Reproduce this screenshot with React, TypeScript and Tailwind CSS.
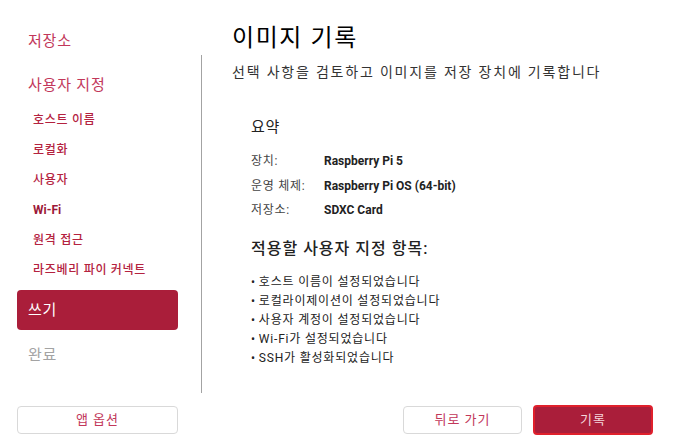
import React from 'react';

const font = { fontFamily: 'Roboto, "Noto Sans CJK KR", sans-serif' };

const subItems = ['호스트 이름', '로컬화', '사용자', 'Wi-Fi', '원격 접근', '라즈베리 파이 커넥트'];

const customizations = [
    '호스트 이름이 설정되었습니다',
    '로컬라이제이션이 설정되었습니다',
    '사용자 계정이 설정되었습니다',
    'Wi-Fi가 설정되었습니다',
    'SSH가 활성화되었습니다',
];

export default function App() {
    return (
        <div className="w-[675px] h-[442px] bg-white flex flex-col overflow-hidden" style={font}>
            <div className="flex h-[394px]">
                {/* SIDEBAR */}
                <div className="w-[161px] ml-[17px] pt-[21px] flex flex-col">
                    <div className="h-[40px] flex items-center px-[11px] text-[15px] tracking-[0.8px] text-[#c2375a]">저장소</div>
                    <div className="h-[40px] mt-[4px] flex items-center px-[11px] text-[15px] tracking-[0.8px] text-[#c2375a]">사용자 지정</div>
                    {subItems.map(item => (
                        <div
                            key={item}
                            className={`h-[30px] flex items-center px-[16px] text-[12px] ${item === 'Wi-Fi' ? 'font-bold text-[#9c1838]' : 'font-medium tracking-[0.7px] text-[#b4223f]'}`}
                        >
                            {item}
                        </div>
                    ))}
                    <div className="h-[40px] mt-[5px] flex items-center px-[11px] rounded-[4px] bg-[#aa1e3a] text-[15px] tracking-[0.8px] text-white">쓰기</div>
                    <div className="h-[40px] mt-[5px] flex items-center px-[11px] text-[15px] tracking-[0.8px] text-[#a3a3a3]">완료</div>
                </div>

                {/* DIVIDER */}
                <div className="w-px h-[338px] mt-[55px] ml-[23px] bg-[#a3a3a3]" />

                {/* MAIN */}
                <div className="flex-1 pl-[30px] pt-[22px] flex flex-col">
                    <h1 className="text-[24px] leading-[32px] tracking-[1.6px] text-black">이미지 기록</h1>
                    <p className="mt-[8px] text-[14px] leading-[20px] tracking-[1.8px] text-[#333]">선택 사항을 검토하고 이미지를 저장 장치에 기록합니다</p>

                    <div className="pl-[19px] pt-[35px] flex flex-col">
                        <h2 className="text-[15px] leading-[20px] tracking-[0.8px] text-[#222]">요약</h2>
                        <div className="mt-[12px] flex flex-col text-[12px]">
                            {[
                                ['장치:', 'Raspberry Pi 5'],
                                ['운영 체제:', 'Raspberry Pi OS (64-bit)'],
                                ['저장소:', 'SDXC Card'],
                            ].map(([label, value]) => (
                                <div key={label} className="h-[24.5px] flex items-center">
                                    <span className="w-[73px] tracking-[0.7px] text-[#444]">{label}</span>
                                    <span className="font-bold text-[#222]">{value}</span>
                                </div>
                            ))}
                        </div>

                        <h2 className="mt-[15px] text-[16px] leading-[22px] tracking-[1px] font-medium text-[#222]">적용할 사용자 지정 항목:</h2>
                        <ul className="mt-[13px] flex flex-col text-[12px] leading-[19px] tracking-[0.8px] text-[#222]">
                            {customizations.map(c => (
                                <li key={c} className="h-[19px] flex items-center">
                                    <span className="mr-[3px]">•</span>
                                    {c}
                                </li>
                            ))}
                        </ul>
                    </div>
                </div>
            </div>

            {/* BOTTOM BAR */}
            <div className="flex-1 flex items-start">
                <button className="ml-[17px] mt-[12px] w-[161px] h-[28px] rounded-[4px] border border-[#d9d9d9] bg-white text-[13px] tracking-[1px] text-[#c2375a]">
                    앱 옵션
                </button>
                <div className="flex-1" />
                <button className="mt-[12px] w-[119px] h-[28px] rounded-[4px] border border-[#d9d9d9] bg-white text-[13px] tracking-[1px] text-[#c2375a]">
                    뒤로 가기
                </button>
                <button className="ml-[11px] mr-[22px] mt-[11px] w-[120px] h-[30px] rounded-[4px] border-2 border-[#e0202c] bg-[#aa1e3a] text-[13px] tracking-[1px] text-[#f4d6dc]">
                    기록
                </button>
            </div>
        </div>
    );
}
